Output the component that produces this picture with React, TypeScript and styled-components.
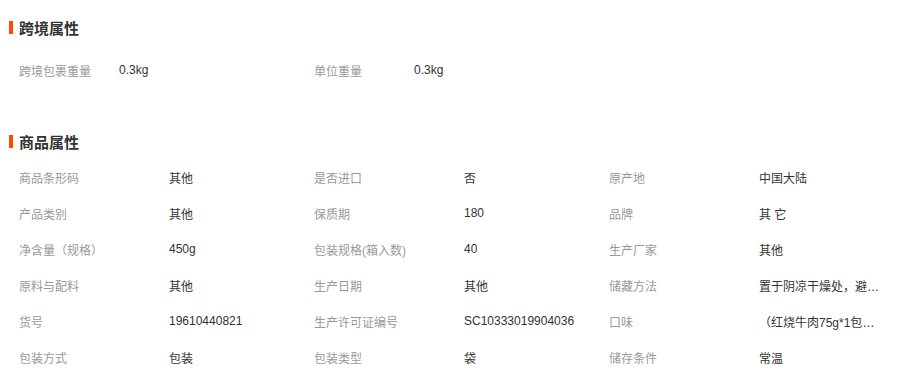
import styled, { createGlobalStyle } from 'styled-components';

const GlobalStyle = createGlobalStyle`
  body {
    margin: 0;
    background: #fff;
    font-family: "Liberation Sans", "Noto Sans CJK SC", sans-serif;
  }
`;

const Page = styled.div`
  padding: 17px 0 0 9px;
  width: 890px;
`;

const Section = styled.section<{ $gap: number; $bottom: number }>`
  display: flex;
  flex-direction: column;
  gap: ${(p) => p.$gap}px;
  margin-bottom: ${(p) => p.$bottom}px;
`;

const Title = styled.h3`
  display: flex;
  align-items: center;
  gap: 6px;
  margin: 0;
  height: 20px;
  font-size: 15px;
  font-weight: bold;
  color: #333;

  &::before {
    content: '';
    width: 4px;
    height: 13px;
    background: #ff4a00;
  }
`;

const Grid = styled.div`
  display: grid;
  grid-template-columns: repeat(3, 295px);
  padding-left: 10px;
`;

const Cell = styled.div`
  display: flex;
  align-items: center;
  height: 36px;
  font-size: 12px;
`;

const Label = styled.span<{ $width: number }>`
  width: ${(p) => p.$width}px;
  flex-shrink: 0;
  color: #999;
`;

const Value = styled.span`
  max-width: 124px;
  color: #333;
  white-space: nowrap;
  overflow: hidden;
  text-overflow: ellipsis;
`;

const crossBorder = [
  ['跨境包裹重量', '0.3kg'],
  ['单位重量', '0.3kg'],
];

const attrs = [
  ['商品条形码', '其他'],
  ['是否进口', '否'],
  ['原产地', '中国大陆'],
  ['产品类别', '其他'],
  ['保质期', '180'],
  ['品牌', '其 它'],
  ['净含量（规格）', '450g'],
  ['包装规格(箱入数)', '40'],
  ['生产厂家', '其他'],
  ['原料与配料', '其他'],
  ['生产日期', '其他'],
  ['储藏方法', '置于阴凉干燥处，避免阳光直射'],
  ['货号', '19610440821'],
  ['生产许可证编号', 'SC10333019904036'],
  ['口味', '（红烧牛肉75g*1包，香辣牛肉75g*1包）'],
  ['包装方式', '包装'],
  ['包装类型', '袋'],
  ['储存条件', '常温'],
];

export default function App() {
  return (
    <Page>
      <GlobalStyle />
      <Section $gap={15} $bottom={43}>
        <Title>跨境属性</Title>
        <Grid>
          {crossBorder.map(([k, v]) => (
            <Cell key={k}>
              <Label $width={100}>{k}</Label>
              <Value>{v}</Value>
            </Cell>
          ))}
        </Grid>
      </Section>
      <Section $gap={8} $bottom={0}>
        <Title>商品属性</Title>
        <Grid>
          {attrs.map(([k, v]) => (
            <Cell key={k}>
              <Label $width={150}>{k}</Label>
              <Value title={v}>{v}</Value>
            </Cell>
          ))}
        </Grid>
      </Section>
    </Page>
  );
}
